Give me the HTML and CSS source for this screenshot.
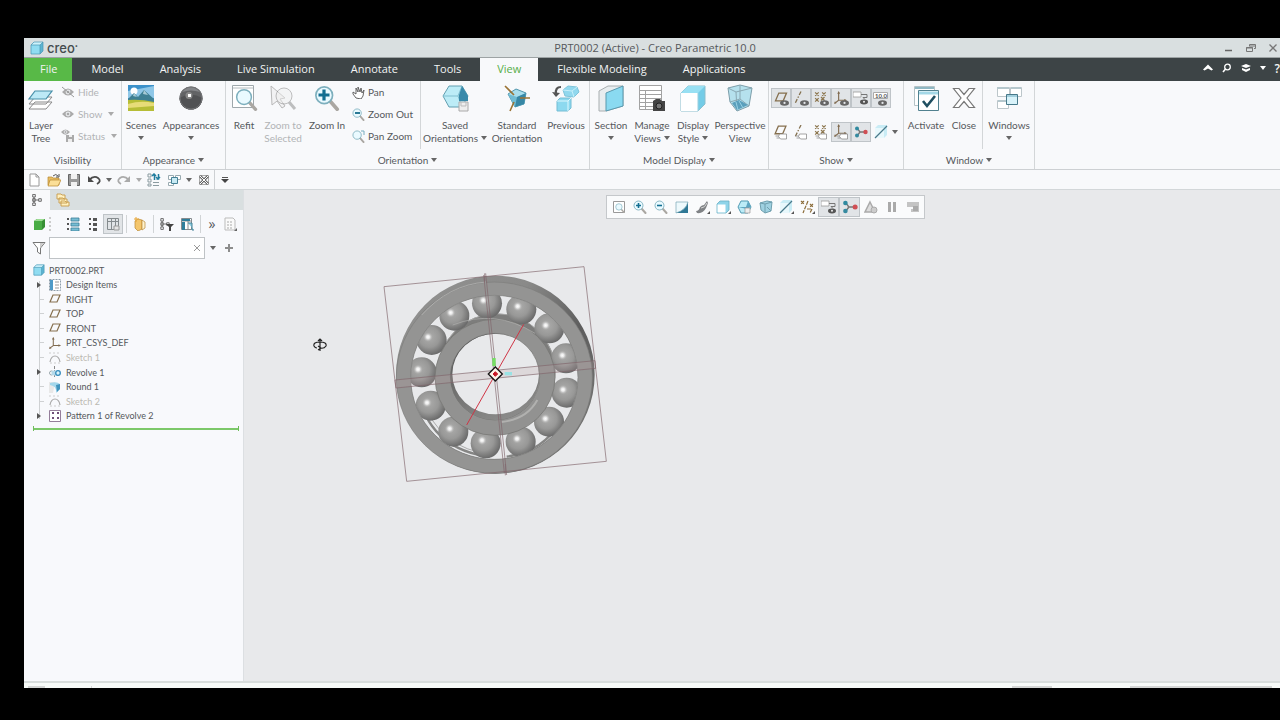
FILE: index.html
```html
<!DOCTYPE html>
<html lang="en">
<head>
<meta charset="utf-8">
<title>PRT0002 (Active) - Creo Parametric 10.0</title>
<link rel="stylesheet" href="styles.css">
</head>
<body>
<svg class="sprite" aria-hidden="true">
  <defs>
    <radialGradient id="ball" cx=".42" cy=".4" r=".62"><stop offset="0" stop-color="#adadac"/><stop offset=".55" stop-color="#989897"/><stop offset="1" stop-color="#686868"/></radialGradient>
    <radialGradient id="glint"><stop offset="0" stop-color="#fff"/><stop offset=".35" stop-color="#e8e8e8"/><stop offset="1" stop-color="#a8a8a7" stop-opacity="0"/></radialGradient>
  </defs>
  <symbol id="cube" viewBox="0 0 14 14"><path d="M1 4l3-3h9v9l-3 3H1z" fill="#5cb5d2"/><path d="M1 4h9v9H1z" fill="#90dcf1"/><path d="M1 4l3-3h9l-3 3z" fill="#cdf2fb"/><path d="M1 4l3-3h9v9l-3 3H1zM1 4h9v9M10 4l3-3" fill="none" stroke="#4795b3" stroke-width=".7"/></symbol>
  <symbol id="eye" viewBox="0 0 12 8"><path d="M0 4Q6-3 12 4Q6 11 0 4z" fill="currentColor"/><circle cx="6" cy="4" r="2.400" fill="#e9ebed"/><circle cx="6" cy="4" r="1.300" fill="currentColor"/></symbol>
  <symbol id="seen" viewBox="0 0 8 5"><ellipse cx="4" cy="2.500" rx="4" ry="2.400" fill="#666"/><circle cx="4" cy="2.400" r="1" fill="#e5e7ea"/></symbol>
  <symbol id="tag" viewBox="0 0 12 7"><path d="M4 1h7v5H5L3 3.500z" fill="#fff" stroke="#8d8d8d" stroke-width=".8"/><path d="M0 3h3M1 5h3" stroke="#8d8d8d" stroke-width=".8"/></symbol>
  <symbol id="plane" viewBox="0 0 12 10"><path d="M4 1h7L8 8H1z" fill="none" stroke="#86704f" stroke-width="1.200"/></symbol>
  <symbol id="axis" viewBox="0 0 12 12"><path d="M8 0L2 12" fill="none" stroke="#84704e" stroke-width="1.300" stroke-dasharray="4 1.500 1.500 1.500"/></symbol>
  <symbol id="points" viewBox="0 0 12 10"><path d="M1 1l3 3m0-3L1 4M7 1l3 3m0-3L7 4M1 6l3 3m0-3L1 9M6 5l3 3m0-3L6 8" stroke="#8d774f" stroke-width="1.100"/></symbol>
  <symbol id="csys" viewBox="0 0 14 14"><path d="M5 1v9h8M5 10l-4 3" fill="none" stroke="#806b50" stroke-width="1.200"/><path d="M3.500 3L5 0l1.500 3zM11 8.500L14 10l-3 1.500zM0 14l1-3 2 2z" fill="#806b50"/></symbol>
  <symbol id="spin" viewBox="0 0 14 12"><path d="M3 2l3 4h6M6 6l-3 4" fill="none" stroke="#777" stroke-width="1.300"/><circle cx="3" cy="2.500" r="2" fill="#2f8aa0"/><circle cx="3" cy="9.500" r="2" fill="#358aa0"/><circle cx="11.500" cy="6" r="2.200" fill="#d04f55"/></symbol>
  <symbol id="notes" viewBox="0 0 16 14"><path d="M0 1h8v5H0z" fill="#fff" stroke="#999" stroke-width=".8"/><path d="M8 3.500h6v3h-4l2 2" fill="none" stroke="#777"/><ellipse cx="11" cy="11" rx="4" ry="2.400" fill="#555"/><circle cx="11" cy="10.800" r="1" fill="#eee"/></symbol>
  <symbol id="glass" viewBox="0 0 14 14"><path d="M8.500 8.500l4 4.500" stroke="#aaa7a2" stroke-width="2" stroke-linecap="round"/><circle cx="5.500" cy="5.500" r="4.500" fill="#eafaff" stroke="#7dafbd" stroke-width=".9"/></symbol>
  <symbol id="sheet-axis" viewBox="0 0 14 14"><path d="M1 3L4 0h9v10l-3 3H1z" fill="#c9ecf5"/><path d="M1 3h9v10H1z" fill="#e8f8fc"/><path d="M1 13L13 1" stroke="#49798a" stroke-width="1.300"/></symbol>
  <symbol id="tree" viewBox="0 0 12 14"><path d="M1 .5h3v3H1zM1 5.500h3v3H1zM1 10.500h3v3H1zM8 5.500h3v3H8zM4.500 7H8M2.500 3.500v7" fill="none" stroke="#555"/></symbol>
  <symbol id="sketch" viewBox="0 0 12 12"><path d="M1 10Q2 4 6 4t5 6" fill="none" stroke="#aaa" stroke-width="1.200"/><path d="M0 1h12M1 11h10" stroke="#ccc" stroke-dasharray="2 2"/></symbol>
</svg>

<div class="window">
  <header class="titlebar">
    <div class="brand"><svg width="14" height="14"><use href="#cube"/></svg><span>creo<sup>•</sup></span></div>
    <h1>PRT0002 (Active) - Creo Parametric 10.0</h1>
    <div class="window-buttons">
      <button aria-label="Minimize"><svg width="10" height="10"><path d="M1 7.500h7" stroke="#666" stroke-width="1.500"/></svg></button>
      <button aria-label="Restore"><svg width="10" height="10"><path d="M3.500 3V1.500h6v4H8M.5 4.500h6v4h-6zM3 3h6M0 5h7" fill="none" stroke="#777"/></svg></button>
      <button aria-label="Close application"><svg width="10" height="10"><path d="M1.500 1.500l7 7m0-7l-7 7" stroke="#777" stroke-width="1.300"/></svg></button>
    </div>
  </header>

  <nav class="tabs">
    <button class="tab file">File</button><button class="tab">Model</button><button class="tab">Analysis</button><button class="tab">Live Simulation</button><button class="tab">Annotate</button><button class="tab">Tools</button><button class="tab active">View</button><button class="tab">Flexible Modeling</button><button class="tab">Applications</button>
    <div class="tab-tools">
      <button aria-label="Collapse ribbon"><svg width="10" height="10"><path d="M0 6.500L5 1.500l5 5-1.500 1L5 5.500l-3.500 2z" fill="#fff"/></svg></button>
      <button aria-label="Search"><svg width="10" height="10"><circle cx="5.500" cy="4" r="2.800" fill="none" stroke="#fff" stroke-width="1.300"/><path d="M3.500 6L1 9" stroke="#fff" stroke-width="1.600"/></svg></button>
      <button aria-label="Learning"><svg width="10" height="10"><path d="M0 3l5-2 5 2-5 2zM1 5l4 1.500L9 5v2L5 9 1 7z" fill="#fff"/></svg></button>
      <button aria-label="Learning menu"><i class="caret"></i></button>
      <button aria-label="Help" class="help">?</button>
    </div>
  </nav>

  <section class="ribbon" aria-label="View ribbon">
    <div class="group g-visibility">
      <div class="tools">
        <button class="big w34"><svg width="28" height="28"><path d="M8 18h17l-6 7H2zM8 13h17l-6 7H2z" fill="#fff" stroke="#8a8a8a"/><path d="M8 7h17l-6 8H2z" fill="#bce9f6" stroke="#478fa8" stroke-width="1.200"/></svg><span>Layer<br>Tree</span></button>
        <div class="stack">
          <button class="small off"><svg width="14" height="12" color="#aaa"><use href="#eye" x="1" y="2" width="12" height="8"/><path d="M1 1l12 10" stroke="#999"/></svg>Hide</button>
          <button class="small off"><svg width="14" height="12" color="#aaa"><use href="#eye" x="1" y="2" width="12" height="8"/></svg>Show<i class="caret"></i></button>
          <button class="small off"><svg width="14" height="14" color="#aaa"><use href="#eye" x="0" y="0" width="9" height="6"/><path d="M5 6h8v7H5z" fill="#aaa"/><path d="M8 6h3v2H8zM7 10h4v3H7z" fill="#eee"/></svg>Status<i class="caret"></i></button>
        </div>
      </div>
      <h2>Visibility</h2>
    </div>

    <div class="group g-appearance">
      <div class="tools">
        <button class="big w36"><svg width="28" height="28"><path d="M1 1h26v26H1z" fill="#3c91ca"/><path d="M1 7l26-5v12H1z" fill="#8fc7e7"/><circle cx="7" cy="7" r="3.500" fill="#fff"/><path d="M1 15l6-6 4 4 6-7 10 9v3H1z" fill="#3e8093"/><path d="M7 9l3 4-4-1zM17 6l4 5-5-1z" fill="#a7cbd5"/><path d="M1 16q13-1 26 2v9H1z" fill="#b6bd36"/><path d="M1 20q13-4 26-1v3L1 24z" fill="#e7dc78"/></svg><span>Scenes<br><i class="caret"></i></span></button>
        <button class="big w64"><svg width="28" height="28"><circle cx="14" cy="14" r="11.500" fill="#626365"/><path d="M2.500 14q11-7 23 0a11.500 11.500 0 0 1-23 0z" fill="#515254"/><path d="M5 8q9-10 18 0-9-3-18 0z" fill="#85878a"/><circle cx="14" cy="14" r="11" fill="none" stroke="#727375"/><circle cx="12" cy="11.500" r="3.500" fill="#888"/><path d="M11 10h3v3h-3z" fill="#fff"/></svg><span>Appearances<br><i class="caret"></i></span></button>
      </div>
      <h2>Appearance<i class="caret gap"></i></h2>
    </div>

    <div class="group g-orientation">
      <div class="tools">
        <button class="big w34"><svg width="28" height="28"><path d="M2.500 1.500h21v22h-21z" fill="#fff" stroke="#9fa8ac"/><path d="M3 4h20" stroke="#b5bcbf"/><use href="#glass" x="5" y="4" width="23" height="23"/></svg><span>Refit</span></button>
        <button class="big w44 off"><svg width="28" height="28"><path d="M2 2l1 19 5-4 5 7 3-2-5-7 5-1z" fill="#f2f2f3" stroke="#b8b8b8"/><g opacity=".45"><circle cx="15" cy="12" r="8" fill="#eee" stroke="#777"/><path d="M20 18l6 7" stroke="#777" stroke-width="3"/></g></svg><span>Zoom to<br>Selected</span></button>
        <button class="big w44"><svg width="28" height="28"><use href="#glass" x="1" y="1" width="26" height="26"/><path d="M11 5.500v11M5.500 11h11" stroke="#126e91" stroke-width="3.200"/></svg><span>Zoom In</span></button>
        <div class="stack pans">
          <button class="small"><svg width="13" height="13"><path d="M4 12L1 8V6l3 2V2l2 4V1l2 5 1-4 1 5 2-3-1 6-2 3z" fill="#fff" stroke="#555" stroke-width=".9"/></svg>Pan</button>
          <button class="small"><svg width="13" height="13"><use href="#glass" width="13" height="13"/><path d="M3 5h5" stroke="#146a89" stroke-width="1.800"/></svg>Zoom Out</button>
          <button class="small"><svg width="13" height="13"><use href="#glass" width="13" height="13"/><path d="M9 1h3v4" fill="none" stroke="#79aec0"/></svg>Pan Zoom</button>
        </div>
        <div class="divider"></div>
        <button class="big w66"><svg width="28" height="28"><path d="M8 2h13l6 10-6 11H8L2 12z" fill="#bcecf7" stroke="#629eb0"/><path d="M2 12h15l4-10M17 12l4 11" fill="none" stroke="#80bfd0"/><path d="M21 2l6 10v5h-9v-6z" fill="#3989aa"/><path d="M18 18h9v9h-9z" fill="#eee" stroke="#aaa"/><path d="M20 18v4h5v-4" fill="none" stroke="#bbb"/></svg><span>Saved<br>Orientations<i class="caret gap"></i></span></button>
        <button class="big w58"><svg width="28" height="28"><path d="M5 10l8-5 10 4-2 11-9 3z" fill="#a8deed" stroke="#5095ac"/><path d="M5 10l9 3 9-4-2 11-9 3z" fill="#6fbcd4"/><path d="M14 13l9-4-2 11-9 3z" fill="#3787a5"/><path d="M2 2l9 9M17 14h10M11 18l-4 9" stroke="#9a7334" stroke-width="1.600"/></svg><span>Standard<br>Orientation</span></button>
        <button class="big w40"><svg width="28" height="28"><path d="M11 6l5-4 9 1 2 5-5 5-9-1z" fill="#91d8ee" stroke="#7fc4da"/><path d="M11 6l9 1 5-4M20 7l2 6" fill="none" stroke="#c6effa"/><path d="M5 17l3-3h11v10l-3 3H5z" fill="#8dd9ef" stroke="#74bdd4"/><path d="M5 17h11v10M16 17l3-3" fill="none" stroke="#dff8fe"/><path d="M9 3Q3 3 4 10" fill="none" stroke="#555" stroke-width="2.200"/><path d="M0 8l4 5 4-4z" fill="#555"/></svg><span>Previous</span></button>
      </div>
      <h2>Orientation<i class="caret gap"></i></h2>
    </div>

    <div class="group g-display">
      <div class="tools">
        <button class="big w40"><svg width="28" height="28"><path d="M2 7l9-5h15v20l-17 5H2z" fill="#e8edef" stroke="#a9aeb0"/><path d="M9 9l17-7v20L9 27z" fill="#8adaf1" stroke="#5999ae"/></svg><span>Section<br><i class="caret"></i></span></button>
        <button class="big w42"><svg width="28" height="28"><path d="M1.500 1.500h22v24h-22zM1 6.500h22M1 10.500h22M1 14.500h22M1 18.500h22M1 22.500h22M7.500 6v20" fill="#fff" stroke="#a2a2a2"/><path d="M15 17l3-2h4l2 2h3v10H15z" fill="#444"/><circle cx="21" cy="22" r="3" fill="#777" stroke="#222"/></svg><span>Manage<br>Views<i class="caret gap"></i></span></button>
        <button class="big w40"><svg width="28" height="28"><path d="M2 9l7-7h17v18l-7 7H2z" fill="#74cce7" stroke="#8bbfcd"/><path d="M2 9h17v18H2z" fill="#fff"/><path d="M2 9l7-7h17l-7 7z" fill="#98e0f3"/><path d="M19 9v18" stroke="#9bcfdf"/></svg><span>Display<br>Style<i class="caret gap"></i></span></button>
        <button class="big w54"><svg width="28" height="28"><path d="M2 4l12-3 12 3-3 18-12 5-7-9z" fill="#b5e1ed" stroke="#7d9eaa"/><path d="M2 4l8 4 16-4M10 8l1 19M14 1v14l9 7M14 15L4 18" fill="none" stroke="#8aa9b4"/><path d="M13 16l9 5-11 5-5-7z" fill="#5a9fbc"/><path d="M10 18l2 8M13 17l4 7" stroke="#97d1e4"/></svg><span>Perspective<br>View</span></button>
      </div>
      <h2>Model Display<i class="caret gap"></i></h2>
    </div>

    <div class="group g-show">
      <div class="toggles">
        <button class="on" aria-label="Plane display"><svg width="18" height="18"><use href="#plane" x="2" y="3" width="14" height="11"/><use href="#seen" x="8" y="11" width="9" height="6"/></svg></button>
        <button class="on" aria-label="Axis display"><svg width="18" height="18"><use href="#axis" x="1" y="2" width="12" height="13"/><use href="#seen" x="8" y="11" width="9" height="6"/></svg></button>
        <button class="on" aria-label="Point display"><svg width="18" height="18"><use href="#points" x="2" y="2" width="14" height="12"/><use href="#seen" x="8" y="11" width="9" height="6"/></svg></button>
        <button class="on" aria-label="Csys display"><svg width="18" height="18"><use href="#csys" x="2" y="2" width="13" height="13"/><use href="#seen" x="8" y="11" width="9" height="6"/></svg></button>
        <button class="on" aria-label="Annotation display"><svg width="18" height="18"><use href="#notes" x="1" y="2" width="16" height="14"/></svg></button>
        <button class="on" aria-label="Dimension display"><svg width="18" height="18"><path d="M1.500 3.500h14v6h-14z" fill="#fff" stroke="#aaa"/><text x="3" y="9" font-size="6" font-weight="700" fill="#555">10.0</text><use href="#seen" x="6" y="11" width="9" height="6"/></svg></button>
        <button aria-label="Plane tags"><svg width="18" height="18"><use href="#plane" x="2" y="2" width="13" height="11"/><use href="#tag" x="3" y="10" width="13" height="7"/></svg></button>
        <button aria-label="Axis tags"><svg width="18" height="18"><use href="#axis" x="1" y="2" width="12" height="12"/><use href="#tag" x="3" y="10" width="13" height="7"/></svg></button>
        <button aria-label="Point tags"><svg width="18" height="18"><use href="#points" x="2" y="1" width="14" height="12"/><use href="#tag" x="3" y="10" width="13" height="7"/></svg></button>
        <button class="on" aria-label="Csys tags"><svg width="18" height="18"><use href="#csys" x="2" y="1" width="13" height="13"/><use href="#tag" x="4" y="10" width="13" height="7"/></svg></button>
        <button class="on" aria-label="Spin center"><svg width="18" height="18"><use href="#spin" x="2" y="3" width="14" height="12"/></svg></button>
        <button aria-label="Silhouette"><svg width="18" height="18"><use href="#sheet-axis" x="2" y="2" width="14" height="14"/></svg></button>
        <button class="more" aria-label="More display filters"><i class="caret"></i></button>
      </div>
      <h2>Show<i class="caret gap"></i></h2>
    </div>

    <div class="group g-window">
      <div class="tools">
        <button class="big w42"><svg width="28" height="28"><path d="M2.500 2.500h20v19h-20z" fill="#fff" stroke="#b5c3c7"/><path d="M3 4h19" stroke="#8fb7c3" stroke-width="2"/><path d="M6.500 6.500h20v20h-20z" fill="#fff" stroke="#51818f"/><path d="M7 9h19" stroke="#a4d8e7" stroke-width="3"/><path d="M11 17l4 5 8-10" fill="none" stroke="#204f61" stroke-width="2.600"/></svg><span>Activate</span></button>
        <button class="big w34"><svg width="28" height="28"><path d="M3.500 4.500H9l5 6 5-6h5.500L17 14l7.500 9.500H19l-5-6-5 6H3.500L11 14z" fill="#fff" stroke="#777" stroke-width="1.200"/></svg><span>Close</span></button>
        <div class="divider"></div>
        <button class="big w50"><svg width="28" height="28"><path d="M2.500 3.500h12v9h-12zM15.500 3.500h11v9h-11zM2.500 16.500h11v8h-11z" fill="#fff" stroke="#bcc6ca"/><path d="M2 4h12M16 4h10M3 17h10" stroke="#b5c7cd" stroke-width="2"/><path d="M11.500 10.500h11v10h-11z" fill="#d9f3fa" stroke="#47798a"/><path d="M12 12h10" stroke="#6dabc0"/></svg><span>Windows<br><i class="caret"></i></span></button>
      </div>
      <h2>Window<i class="caret gap"></i></h2>
    </div>
  </section>

  <div class="quickbar">
    <button aria-label="New"><svg width="14" height="14"><path d="M3 1h6l3 3v9H3zM9 1v3h3" fill="#fff" stroke="#999"/></svg></button>
    <button aria-label="Open"><svg width="14" height="14"><path d="M1 4h4l1 1h6v7H1z" fill="#e6bd64" stroke="#b8872e" stroke-width=".7"/><path d="M3 7h11l-3 6H1z" fill="#fbdf98" stroke="#b8872e" stroke-width=".7"/><path d="M6 3q3-3 5 0M12 1v3H9" fill="none" stroke="#555"/></svg></button>
    <button aria-label="Save"><svg width="14" height="14"><path d="M1.500 1.500h11v11h-11z" fill="#999" stroke="#666"/><path d="M4 1h6v5H4zM4 9h6v4H4z" fill="#f1f1f1"/></svg></button>
    <button aria-label="Undo"><svg width="14" height="14"><path d="M2 7q5-5 9-2t-1 6" fill="none" stroke="#4b4b4b" stroke-width="1.800"/><path d="M1 3v6h6z" fill="#4b4b4b"/></svg></button>
    <button class="drop" aria-label="Undo list"><i class="caret"></i></button>
    <button class="off" aria-label="Redo"><svg width="14" height="14"><path d="M12 7Q7 2 3 5t1 6" fill="none" stroke="#aaa" stroke-width="1.800"/><path d="M13 3v6H7z" fill="#aaa"/></svg></button>
    <button class="drop off" aria-label="Redo list"><i class="caret"></i></button>
    <button aria-label="Regenerate"><svg width="14" height="14"><path d="M1 1h3v3H1zM1 6h3v3H1zM1 11h3v2H1zM6 9.500h6M6 12.500h6" fill="none" stroke="#8b9ba0"/><path d="M7.500 7V2h-2M5 3l2-2 2 2M11.500 1v5h-2M9 4l2 2 2-2" fill="none" stroke="#207d9e" stroke-width="1.500"/></svg></button>
    <button aria-label="Windows"><svg width="14" height="14"><path d="M1.500 2.500h5v4h-5zM8.500 2.500h5v4h-5zM1.500 9.500h5v3h-5z" fill="#fff" stroke="#99aab0"/><path d="M4.500 4.500h6v6h-6z" fill="#c7eaf4" stroke="#458196"/></svg></button>
    <button class="drop" aria-label="Window list"><i class="caret"></i></button>
    <button aria-label="Close window"><svg width="14" height="14"><path d="M2.500 2.500h9v9h-9z" fill="none" stroke="#aaa"/><path d="M3 3l8 8m0-8l-8 8" stroke="#666" stroke-width="2.600"/><path d="M3 3l8 8m0-8l-8 8" stroke="#fff"/></svg></button>
    <button class="customize" aria-label="Customize toolbar"><svg width="8" height="8"><path d="M1 1.500h6" stroke="#555"/><path d="M0 3h8L4 7z" fill="#444"/></svg></button>
  </div>

  <main class="workspace">
    <aside class="panel">
      <div class="panel-tabs">
        <button class="current" aria-label="Model tree"><svg width="12" height="12"><use href="#tree"/></svg></button>
        <button aria-label="Folder browser"><svg width="14" height="14"><path d="M1 1h4l1 1h3v4H1zM3 5h4l1 1h3v4H3zM5 8h4l1 1h3v4H5z" fill="#fff0bf" stroke="#c59a4b" stroke-width=".9"/></svg></button>
      </div>
      <div class="panel-tools">
        <button aria-label="Part"><svg width="12" height="14"><path d="M1 4l3-2h8v8l-3 3H1z" fill="#378f35"/><path d="M1 4h8v9H1z" fill="#49ac45"/><path d="M1 4l3-2h8L9 4z" fill="#9cdc94"/></svg></button>
        <span class="grip"></span>
        <button class="push" aria-label="Expand"><svg width="14" height="14"><path d="M5 1h8v3H5zM5 6h8v3H5zM5 11h8v3H5z" fill="#77bdd4" stroke="#3b7f97" stroke-width=".8"/><path d="M1 1h2v2H1zM1 6h2v2H1zM1 11h2v2H1z" fill="#555"/></svg></button>
        <button aria-label="Collapse"><svg width="14" height="14"><path d="M3 1h2v2H3zM3 6h2v2H3zM3 11h2v2H3zM7 1h4v3H7zM7 6h4v3H7zM7 11h4v3H7z" fill="#555"/></svg></button>
        <button class="on" aria-label="Tree columns"><svg width="14" height="14"><path d="M1.500 1.500h11v11h-11zM1 4.500h12M5.500 1v12M9.500 1v12" fill="none" stroke="#858b8e"/><path d="M8 9h5v4H8z" fill="#e5e5e5" stroke="#999"/></svg></button>
        <span class="rule"></span>
        <button aria-label="Layers"><svg width="14" height="14"><path d="M2 4l3-2 4 1v9l-4 2-3-3z" fill="#f4c66d" stroke="#b88835" stroke-width=".7"/><path d="M9 3l3 2v6l-3 2z" fill="#fff3cf" stroke="#b88835" stroke-width=".7"/><path d="M3 0v5M1 2h5" stroke="#e8a637"/></svg></button>
        <span class="rule"></span>
        <button aria-label="Tree filter"><svg width="14" height="14"><use href="#tree" width="10" height="14"/><path d="M6 7h8l-3 3v4h-2v-4z" fill="#444"/></svg></button>
        <button aria-label="Tree settings"><svg width="14" height="14"><path d="M1.500 1.500h10v11h-10zM1 4h11M8 1v12" fill="#fff" stroke="#858b8e"/><path d="M2 2h8v2H2zM2 5h3v8H2z" fill="#2f7e9b"/><path d="M8 6h4v7h2" fill="#8dcde1" stroke="#458196"/></svg></button>
        <span class="rule"></span>
        <button class="chevrons" aria-label="More">»</button>
        <button aria-label="Report"><svg width="14" height="14"><path d="M2 1h8l2 2v10H2z" fill="#fafafa" stroke="#bbb"/><path d="M4 5h6M4 8h6M4 11h6" stroke="#aaa" stroke-dasharray="2 1"/><path d="M14 11v3h-3z" fill="#666"/></svg></button>
      </div>
      <form class="filter">
        <svg width="16" height="16"><path d="M2 2.500h12L9.500 8v6l-3-2V8z" fill="#fff" stroke="#777"/><path d="M9 3h4L9 8v5" fill="#ccc"/></svg>
        <div class="search"><input type="text" aria-label="Filter model tree"><button type="button" aria-label="Clear filter"><svg width="8" height="8"><path d="M1 1l6 6m0-6L1 7" stroke="#999"/></svg></button></div>
        <button type="button" class="drop" aria-label="Filter options"><i class="caret"></i></button>
        <button type="button" aria-label="Add filter"><svg width="10" height="10"><path d="M5 1v8M1 5h8" stroke="#8d8d8d" stroke-width="2"/></svg></button>
      </form>
      <ul class="tree">
        <li class="root"><svg width="12" height="12"><use href="#cube"/></svg>PRT0002.PRT</li>
        <li class="parent"><svg width="12" height="12"><path d="M.5.5h11v11H.5z" fill="#fff" stroke="#8c9daa" stroke-dasharray="2 1"/><path d="M1 1h3v10H1z" fill="#4f9ac7"/><path d="M6 3h4M6 6h4M6 9h4" stroke="#999"/></svg>Design Items</li>
        <li><svg width="12" height="12"><use href="#plane" y="1" width="12" height="10"/></svg>RIGHT</li>
        <li><svg width="12" height="12"><use href="#plane" y="1" width="12" height="10"/></svg>TOP</li>
        <li><svg width="12" height="12"><use href="#plane" y="1" width="12" height="10"/></svg>FRONT</li>
        <li><svg width="12" height="12"><use href="#csys"/></svg>PRT_CSYS_DEF</li>
        <li class="off"><svg width="12" height="12"><use href="#sketch"/></svg>Sketch 1</li>
        <li class="parent"><svg width="12" height="12"><path d="M5.500 0v12" stroke="#888" stroke-dasharray="3 1"/><circle cx="2.500" cy="7" r="2" fill="#fff" stroke="#98a4aa"/><path d="M2.500 5l7-1v6l-7-1z" fill="#b6d9e9"/><circle cx="9" cy="7" r="2.300" fill="#d9f3fa" stroke="#348bbc" stroke-width="1.300"/></svg>Revolve 1</li>
        <li><svg width="12" height="12"><path d="M0 1h6l-2 11H0z" fill="#e8e8e8"/><path d="M1 2q7-2 10 1v5l-4 4q1-7-6-8z" fill="#a3d7ec"/><path d="M7 4l4-1v5l-3 3z" fill="#4093bd"/></svg>Round 1</li>
        <li class="off"><svg width="12" height="12"><use href="#sketch"/></svg>Sketch 2</li>
        <li class="parent"><svg width="12" height="12"><path d="M.5.5h11v11H.5z" fill="#fff" stroke="#957e9b"/><path d="M3 2h2v2H3zM8 2h2v2H8zM3 7h2v2H3zM8 7h2v2H8z" fill="#704f79"/></svg>Pattern 1 of Revolve 2</li>
      </ul>
      <div class="insert-here"></div>
    </aside>

    <section class="viewport" aria-label="Graphics area">
      <div class="view-tools">
        <button aria-label="Refit"><svg width="14" height="14"><path d="M1.500 1.500h11v11h-11z" fill="#fff" stroke="#999"/><use href="#glass" x="3" y="3" width="10" height="10"/></svg></button>
        <button aria-label="Zoom in"><svg width="14" height="14"><use href="#glass"/><path d="M5.500 3v5M3 5.500h5" stroke="#126e91" stroke-width="1.600"/></svg></button>
        <button aria-label="Zoom out"><svg width="14" height="14"><use href="#glass"/><path d="M3 5.500h5" stroke="#126e91" stroke-width="1.600"/></svg></button>
        <button aria-label="Repaint"><svg width="14" height="14"><path d="M1 2h12v11H1z" fill="#2f7895"/><path d="M1 2h12Q11 10 1 13z" fill="#eef9fc" stroke="#78a7b6" stroke-width=".7"/></svg></button>
        <button aria-label="Rendering options"><svg width="15" height="14"><path d="M1 11q3 0 4-4 2-2 4-2l3-4 1 2-2 5q-3 6-9 5z" fill="#808386"/><path d="M6 8q4 0 6-5" fill="none" stroke="#d5d5d5"/><path d="M15 11v3h-3z" fill="#555"/></svg></button>
        <button aria-label="Display style"><svg width="15" height="14"><path d="M1 4l3-3h9v9l-3 3H1z" fill="#8fd4e9" stroke="#6bb0c4" stroke-width=".8"/><path d="M1.500 4.500h8v8h-8z" fill="#fff"/><path d="M15 11v3h-3z" fill="#555"/></svg></button>
        <button aria-label="Saved orientations"><svg width="15" height="14"><path d="M4 1h7l3 6-3 6H4L1 7z" fill="#bcecf7" stroke="#529bb3"/><path d="M1 7h8l2-6 3 6-4 2z" fill="#5ea7c2"/><path d="M8 8h5v5H8z" fill="#eee" stroke="#999" stroke-width=".7"/></svg></button>
        <button aria-label="Perspective view"><svg width="14" height="14"><path d="M1 3l7-2 5 1-1 9-6 2-4-3z" fill="#9fd1e1" stroke="#6f9fae"/><path d="M1 3l5 1 7-2M6 4v9M8 7l4 4" fill="none" stroke="#6f9fae"/></svg></button>
        <button aria-label="Section display"><svg width="15" height="14"><use href="#sheet-axis" width="14" height="14"/><path d="M15 11v3h-3z" fill="#555"/></svg></button>
        <button aria-label="Datum display filters"><svg width="15" height="14"><path d="M1 1l3 3m0-3L1 4M8 1L3 13M10 4l3 3m0-3l-3 3M7 9h4M12 9l-2 4" stroke="#8b6c39" stroke-width="1.200" stroke-dasharray="4 1"/><path d="M15 11v3h-3z" fill="#555"/></svg></button>
        <button class="on" aria-label="Annotations"><svg width="16" height="14"><use href="#notes"/></svg></button>
        <button class="on" aria-label="Spin center"><svg width="16" height="14"><use href="#spin"/></svg></button>
        <button aria-label="Simulation"><svg width="14" height="14"><path d="M6 2l5 10H1z" fill="#ddd" stroke="#aaa" stroke-width="1.500"/><circle cx="10" cy="10" r="3" fill="#ccc" stroke="#aaa"/></svg></button>
        <button aria-label="Pause"><svg width="14" height="14"><path d="M3 2h3v10H3zM8 2h3v10H8z" fill="#aaa"/></svg></button>
        <button aria-label="Results"><svg width="14" height="14"><path d="M1 2h12v10H5V9h3V7H1z" fill="#c4c4c4"/><path d="M7 6h5v5H7z" fill="#aaa"/></svg></button>
      </div>

      <svg class="bearing" viewBox="0 0 705 690" width="235" height="230" role="img" aria-label="Ball bearing">
        <defs>
          <linearGradient id="side" x1="0" y1="0" x2="1" y2=".6"><stop offset="0" stop-color="#929291"/><stop offset=".5" stop-color="#8a8a89"/><stop offset=".8" stop-color="#5d5d5d"/><stop offset="1" stop-color="#6f6f6e"/></linearGradient>
          <linearGradient id="bore" x1=".2" y1="0" x2=".6" y2="1"><stop offset="0" stop-color="#555"/><stop offset=".6" stop-color="#747473"/><stop offset="1" stop-color="#8b8b8a"/></linearGradient>
          <clipPath id="race"><ellipse cx="343" cy="352" rx="251" ry="246"/></clipPath>
          <g id="sphere"><circle r="45" fill="url(#ball)"/><circle cx="-11" cy="-9" r="15" fill="url(#glint)"/></g>
        </defs>
        <path fill-rule="evenodd" d="M48 344a298 297 0 0 1 596 0a298 297 0 0 1-596 0zM92 352a251 246 0 0 0 502 0a251 246 0 0 0-502 0z" fill="url(#side)"/>
        <g clip-path="url(#race)">
          <path d="M118 415Q160 570 330 590M380 590Q490 575 540 485" fill="none" stroke="#858584" stroke-width="7"/>
          <path d="M122 410Q180 570 335 582" fill="none" stroke="#aaa" stroke-width="3"/>
          <ellipse cx="350" cy="337" rx="156" ry="156" fill="none" stroke="#7d7d7c" stroke-width="40"/>
          <ellipse cx="350" cy="337" rx="176" ry="176" fill="none" stroke="#a4a4a3" stroke-width="3"/>
          <use href="#sphere" x="321" y="130"/><use href="#sphere" x="424" y="148"/><use href="#sphere" x="508" y="205"/><use href="#sphere" x="558" y="295"/><use href="#sphere" x="560" y="398"/><use href="#sphere" x="507" y="485"/><use href="#sphere" x="422" y="545"/><use href="#sphere" x="317" y="550"/><use href="#sphere" x="220" y="515"/><use href="#sphere" x="152" y="437"/><use href="#sphere" x="125" y="337"/><use href="#sphere" x="155" y="240"/><use href="#sphere" x="223" y="167"/>
        </g>
        <path fill-rule="evenodd" d="M49 353a294 287 0 0 1 588 0a294 287 0 0 1-588 0zM92 352a251 246 0 0 0 502 0a251 246 0 0 0-502 0z" fill="#949493" stroke="#7d7d7c" stroke-width="2"/>
        <path d="M125 165Q205 75 318 66" fill="none" stroke="#bcbcbb" stroke-width="2"/>
        <path fill-rule="evenodd" d="M165 352a180 174 0 0 1 360 0a180 174 0 0 1-360 0zM211 350a134 130 0 0 0 268 0a134 130 0 0 0-268 0z" fill="#929291" stroke="#72726f" stroke-width="2"/>
        <path fill-rule="evenodd" d="M211 350a134 130 0 0 1 268 0a134 130 0 0 1-268 0zM217 342a130 121 0 0 0 260 0a130 121 0 0 0-260 0z" fill="url(#bore)"/>
        <path d="M218 195Q345 145 465 220" fill="none" stroke="#b0b0af" stroke-width="2"/>
        <path d="M365 486Q440 478 472 420" fill="none" stroke="#bbbbba" stroke-width="6" opacity=".75"/>
        <path d="M45 360L645 302 647 325 48 384z" fill="#b89ba0" fill-opacity=".22"/>
        <path d="M12 80L612 20 679 604 80 664zM45 360L645 302 647 325 48 384zM311 45L373 640M317 40L380 645M314 40v28M376 612v34" fill="none" stroke="#80656b" stroke-width="2"/>
        <path d="M431 193L260 495" stroke="#cf3545" stroke-width="3"/>
        <path d="M342 294v24" stroke="#75df63" stroke-width="10"/><path d="M374 341h22" stroke="#99e2e4" stroke-width="10"/>
        <path d="M346 321l21 21-21 21-21-21z" fill="#fff4ea" stroke="#151515" stroke-width="4"/><path d="M346 335l7 7-7 7-7-7z" fill="#c91826" stroke="#c91826" stroke-width="3"/>
      </svg>
      <svg class="spin-cursor" width="14" height="14"><path d="M1 8q-1-4 6-4t6 4q-2 3-6 2M5 8l3 2-3 2M7 1v12M5 3l2-2 2 2M1 8q1 2 3 2" fill="none" stroke="#222" stroke-width="1.200"/></svg>
    </section>
  </main>

  <footer class="status"><span class="s1"></span><span class="s2"></span><span class="s3"></span><span class="s4"></span></footer>
</div>
</body>
</html>
```
FILE: styles.css
```css
* { box-sizing: border-box; }
body {
  margin: 0;
  min-height: 100vh;
  background: #000;
  padding: 38px 0 32px 24px;
  display: flex;
  overflow: hidden;
  font-family: "Open Sans", "Noto Sans", sans-serif;
  font-size: 10px;
  color: #55585b;
}
button, input { font: inherit; color: inherit; }
button { border: 0; padding: 0; background: none; display: flex; align-items: center; justify-content: center; }
svg { display: block; flex: none; }
h1, h2 { margin: 0; font-weight: 400; }
.sprite { position: absolute; width: 0; height: 0; }
.window { flex: 1; min-width: 0; display: flex; flex-direction: column; background: #f8f9fb; }
.caret { display: inline-block; border: 3px solid transparent; border-top: 4px solid #666; border-bottom: 0; vertical-align: 2px; }
.caret.gap { margin-left: 3px; }

.titlebar { height: 20px; background: #d9dfe0; display: grid; grid-template-columns: 1fr auto 1fr; align-items: center; border-bottom: 1px solid #9da3a4; }
.titlebar h1 { font-size: 11px; line-height: 20px; padding-left: 6px; }
.brand { display: flex; align-items: center; gap: 3px; padding-left: 6px; font: 500 13px/16px "Inter", sans-serif; color: #444b4e; }
.brand sup { font-size: 6px; line-height: 6px; }
.window-buttons { justify-self: end; display: flex; gap: 12px; padding-right: 2px; }

.tabs { height: 23px; background: #3d4446; display: flex; gap: 2px; color: #f2f4f4; font-size: 11px; }
.tab { padding: 0 17px 2px; white-space: nowrap; }
.tab.file { padding: 0 15px 2px 16px; background: #58b947; }
.tab.active { background: #f8f9fb; color: #56ae48; }
.tab-tools { margin-left: auto; display: flex; align-items: center; gap: 9px; }
.tab-tools .caret { border-top-color: #fff; }
.tab-tools button { margin-bottom: 3px; }
.help { font-size: 12px; font-weight: 600; }

.ribbon { height: 89px; display: flex; border-bottom: 1px solid #cdd0d3; font-family: "Lato", "Noto Sans", sans-serif; }
.group { border-right: 1px solid #d3d6d8; display: flex; flex-direction: column; flex: none; }
.group h2 { height: 16px; line-height: 14px; font-size: 10px; text-align: center; }
.tools { flex: 1; display: flex; }
.g-visibility { width: 98px; }
.g-appearance { width: 104px; }
.g-orientation { width: 364px; }
.g-display { width: 179px; }
.g-show { width: 135px; }
.g-window { width: 131px; }
.g-appearance .tools, .g-orientation .tools, .g-display .tools, .g-window .tools { padding-left: 1px; }
.big { flex-direction: column; justify-content: flex-start; gap: 7px; padding-top: 3px; line-height: 13px; text-align: center; white-space: nowrap; flex: none; }
.w34 { width: 34px; } .w36 { width: 36px; } .w40 { width: 40px; } .w42 { width: 42px; } .w44 { width: 44px; } .w50 { width: 50px; }
.w54 { width: 54px; } .w58 { width: 58px; } .w64 { width: 64px; } .w66 { width: 66px; }
.off { color: #b2b4b6; }
.off .caret { border-top-color: #aaa; }
.stack { display: grid; grid-template-rows: repeat(3, 22px); padding-left: 3px; }
.small { justify-content: flex-start; gap: 3px; white-space: nowrap; }
.small .caret { margin-left: 3px; }
.pans { width: 70px; }
.divider { width: 1px; height: 68px; background: #d3d6d8; margin: 0 1px; }
.toggles { flex: 1; display: grid; grid-template-columns: repeat(6, 20px) 7px; grid-template-rows: 20px 20px; row-gap: 14px; padding: 7px 0 0 2px; }
.toggles button:nth-child(7) { grid-column: 1; }
.toggles .more { justify-content: flex-end; }
.on { background: #e1e4e7; border: 1px solid #bfc4c8; }

.quickbar { height: 20px; display: flex; align-items: center; border-bottom: 1px solid #d3d7d9; }
.quickbar button { width: 20px; height: 20px; }
.quickbar .drop { width: 10px; }
.quickbar .customize { border-left: 1px solid #cdd0d3; }

.workspace { flex: 1; min-height: 0; display: flex; }
.panel { width: 220px; flex: none; background: #f8f9fc; border-right: 1px solid #dcdfe2; }
.panel-tabs { height: 20px; display: flex; background: #d9dfe0; }
.panel-tabs button { width: 26px; }
.panel-tabs .current { background: #f8f9fb; }
.panel-tools { height: 27px; display: flex; align-items: center; padding-left: 5px; }
.panel-tools button { width: 20px; height: 20px; }
.panel-tools .push { margin-left: 12px; }
.grip { height: 14px; border-left: 2px dotted #ccc; }
.panel-tools .rule { width: 1px; height: 18px; background: #d1d4d6; margin: 0 3px; }
.panel-tools .chevrons { width: 16px; font-size: 14px; line-height: 14px; }
.filter { height: 22px; display: flex; align-items: center; padding-left: 7px; gap: 2px; margin: 0; }
.search { width: 156px; height: 22px; display: flex; border: 1px solid #bfc3c6; background: #fff; }
.search input { flex: 1; min-width: 0; border: 0; outline: 0; background: transparent; }
.search button { width: 14px; }
.filter .drop { width: 11px; }
.filter > button { width: 18px; }
.tree { list-style: none; margin: 4px 0 0; padding: 0 0 0 9px; height: 160px; display: grid; grid-auto-rows: 1fr; font-family: "Lato", "Noto Sans", sans-serif; font-size: 9px; background: linear-gradient(#cfd1d3, #cfd1d3) 15px 18px / 1px 138px no-repeat; }
.tree li { display: flex; align-items: center; gap: 5px; padding-left: 6px; white-space: nowrap; }
.tree li::before { content: ""; width: 5px; height: 1px; background: #cfd1d3; }
.tree .root { padding-left: 0; gap: 4px; }
.tree .root::before { display: none; }
.tree .parent { padding-left: 4px; }
.tree .parent::before { width: 0; height: 0; margin-right: 3px; background: none; border: 3px solid transparent; border-left: 4px solid #555; border-right: 0; }
.tree .off { color: #bbbab2; }
.insert-here { margin: 3px 4px 0 9px; height: 5px; border: solid #6fbd5b; border-width: 0 1px; background: linear-gradient(#7cc869, #7cc869) center / 100% 2px no-repeat; }

.viewport { flex: 1; min-width: 0; position: relative; background: #e8e9eb; }
.view-tools { position: absolute; left: 362px; top: 5px; height: 24px; display: flex; align-items: center; background: #fafbfc; border: 1px solid #c5c8cb; padding: 0 1px; }
.view-tools button { width: 21px; height: 20px; }
.bearing { position: absolute; left: 136px; top: 70px; }
.spin-cursor { position: absolute; left: 69px; top: 148px; }
.status { height: 7px; border-top: 2px solid #d8dddc; background: #f7faf8; display: flex; align-items: flex-end; }
.status span { height: 2px; background: #d4d6d5; }
.s1 { width: 17px; margin-left: 4px; }
.s2 { width: 1px; margin-left: 46px; }
.s3 { width: 40px; margin-left: auto; }
.s4 { width: 142px; margin: 0 8px 0 78px; }
```
